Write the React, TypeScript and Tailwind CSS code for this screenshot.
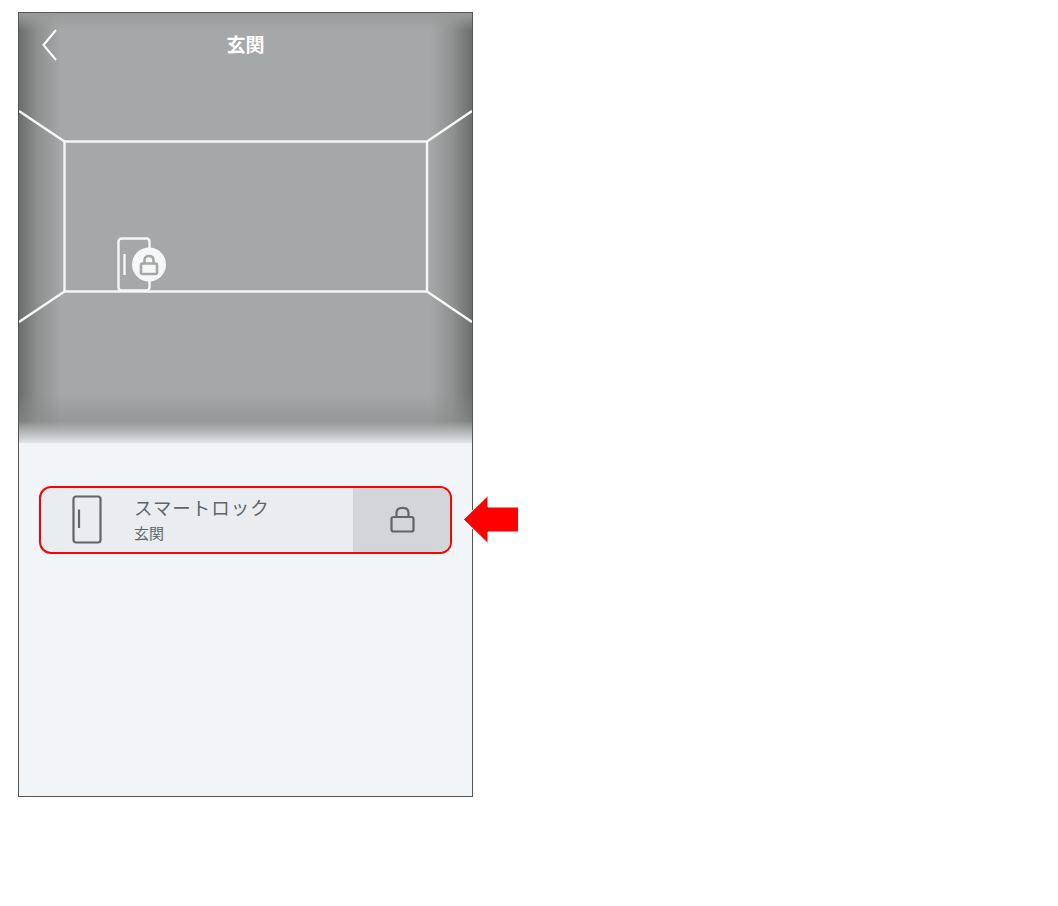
const cjk = "font-['Noto_Sans_CJK_JP','Noto_Sans',sans-serif]";

function DoorIcon() {
  return (
    <svg width="32" height="50" viewBox="0 0 32 50" fill="none" stroke="#5f6569" strokeWidth="2.2">
      <rect x="2.5" y="1.5" width="27" height="46" rx="2.5" />
      <path d="M8 14.5V33" />
    </svg>
  );
}

function LockIcon() {
  return (
    <svg width="28" height="28" viewBox="0 0 28 28" fill="none" stroke="#5f6569" strokeWidth="2.2">
      <rect x="3.5" y="11" width="22" height="14.5" rx="2" />
      <path d="M8.5 11V7C8.5 3.5 10.5 1.8 14.5 1.8S20.5 3.5 20.5 7V11" />
    </svg>
  );
}

function Room() {
  return (
    <div className="relative h-[430px] bg-[#a5a8a8] overflow-hidden">
      <div className="absolute inset-y-0 left-0 w-[42px] bg-gradient-to-r from-[#6c6d6d] via-[#8f9191] via-45% to-transparent" />
      <div className="absolute inset-y-0 right-0 w-[42px] bg-gradient-to-l from-[#6c6d6d] via-[#8f9191] via-45% to-transparent" />
      <div className="absolute inset-x-0 top-0 h-[18px] bg-gradient-to-b from-[#9a9c9c] to-transparent" />
      <div className="absolute inset-x-0 bottom-0 h-[50px] bg-gradient-to-t from-[#8a8c8c] to-transparent" />
      <div className="absolute inset-x-0 bottom-0 h-[22px] bg-gradient-to-t from-[#e2e5e6] via-[#bdc0c0] via-40% to-transparent" />

      <svg className="absolute inset-0" width="453" height="430" fill="none" stroke="#f6f8f8" strokeWidth="2.4">
        <rect x="45.5" y="128.5" width="362.5" height="150" />
        <path d="M0 98L45.5 128.5M453 98L408 128.5M0 309L45.5 278.5M453 309L408 278.5" />
        <rect x="99.5" y="225.5" width="31" height="52" rx="3" />
        <path d="M105.5 241V262" />
        <circle cx="130" cy="251.5" r="17" fill="#f6f8f8" stroke="none" />
        <g stroke="#a5a8a8" strokeWidth="2.6">
          <rect x="122" y="250.5" width="16" height="10.5" rx="1.5" />
          <path d="M125.5 250.5V247C125.5 244.5 127.5 243 130 243S134.5 244.5 134.5 247V250.5" />
        </g>
      </svg>

      <header className="relative flex h-[62px] items-center justify-center">
        <svg className="absolute left-[22px] top-[16px]" width="18" height="32" viewBox="0 0 18 32" fill="none" stroke="#ffffff" strokeWidth="2">
          <path d="M15 1L2.5 16L15 31" />
        </svg>
        <h1 className={`${cjk} text-[19px] font-bold text-white`}>玄関</h1>
      </header>
    </div>
  );
}

function DeviceRow() {
  return (
    <div className="flex h-[68px] overflow-hidden rounded-[12px] border-2 border-[#ff0000] bg-[#e9edf0]">
      <div className="flex w-[93px] shrink-0 items-center justify-center pr-[1px]">
        <DoorIcon />
      </div>
      <div className={`${cjk} flex flex-1 flex-col justify-center pb-[2px] text-[#5f6569]`}>
        <span className="text-[18.5px] leading-[26px] tracking-[0.95px]">スマートロック</span>
        <span className="mt-[2px] text-[15px] leading-[22px]">玄関</span>
      </div>
      <div className="flex w-[97px] shrink-0 items-center justify-center bg-[#d2d6d9]">
        <LockIcon />
      </div>
    </div>
  );
}

export default function App() {
  return (
    <div className="relative min-h-[906px] bg-white pl-[18px] pt-[12px]">
      <div className="flex h-[785px] w-[455px] flex-col border border-[#555555] bg-[#f1f5f8]">
        <Room />
        <div className="px-[20px] pt-[43px]">
          <DeviceRow />
        </div>
      </div>
      <svg className="absolute left-[460px] top-[492px]" width="62" height="56" viewBox="0 0 62 56" fill="#ff0000" stroke="#ffffff" strokeWidth="1">
        <path d="M3.5 27.5L28 3.5V15H58.5V40H28V51.5Z" />
      </svg>
    </div>
  );
}
